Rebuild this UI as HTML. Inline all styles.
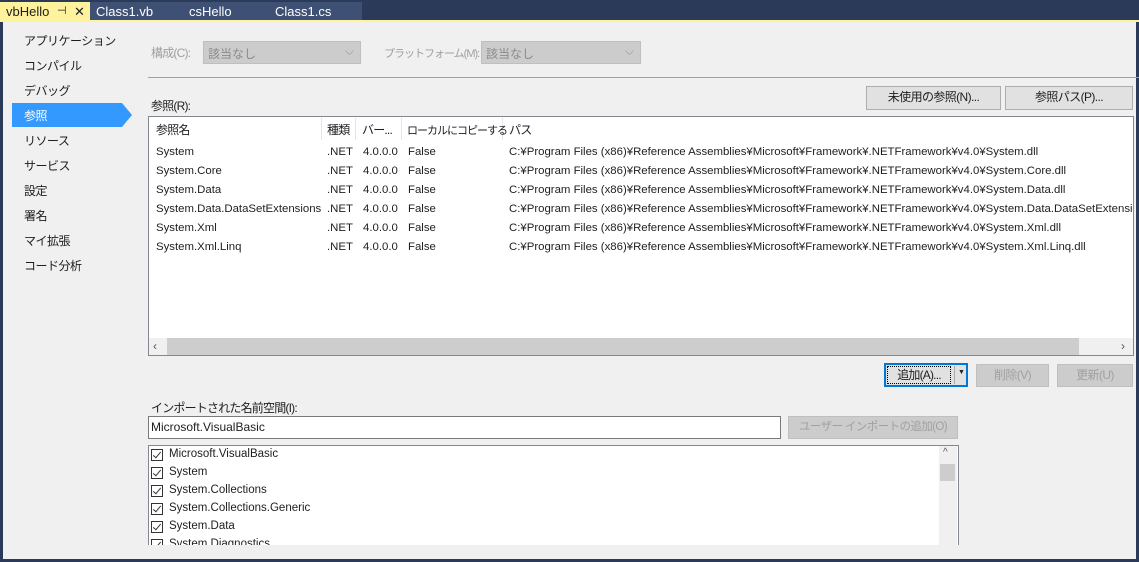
<!DOCTYPE html>
<html><head><meta charset="utf-8"><style>
*{margin:0;padding:0;box-sizing:border-box}
body{width:1139px;height:562px;overflow:hidden;background:#2a3a58;font-family:"Liberation Sans","Noto Sans CJK JP",sans-serif;font-size:12px;color:#1e1e1e;position:relative}
.a{position:absolute;white-space:nowrap}
.j{letter-spacing:-0.8px}
.main{position:absolute;left:3px;top:22px;width:1133px;height:537px;background:#f0f0f0}
.tab{position:absolute;top:2px;height:19px;color:#fff;font-size:13px;line-height:19px;padding-left:6px;white-space:nowrap}
.nav{position:absolute;left:24px;font-size:12px;letter-spacing:-0.5px}
.btn{position:absolute;border:1px solid #adadad;background:#e1e1e1;text-align:center;line-height:21px;letter-spacing:-0.6px;white-space:nowrap}
.dis{background:#cccccc;border-color:#bfbfbf;color:#a0a0a0}
.row span{position:absolute;white-space:nowrap;font-size:11.4px}
.cb{position:absolute;left:151px;width:12px;height:12px;border:1px solid #333;background:#fff}
.cb::after{content:"";position:absolute;left:3px;top:0px;width:3px;height:7px;border-right:1.5px solid #333;border-bottom:1.5px solid #333;transform:rotate(40deg)}
.ck{font-size:11.5px}
</style></head><body>
<div class="tab" style="left:0;width:90px;background:#fff29d;color:#1e1e1e">vbHello <span style="position:absolute;left:57px;font-size:11px">⊣</span><span style="position:absolute;left:74px">✕</span></div>
<div class="tab" style="left:90px;width:92px;background:#3e5073">Class1.vb</div>
<div class="tab" style="left:182px;width:88px;background:#3e5073;padding-left:7px">csHello</div>
<div class="tab" style="left:270px;width:92px;background:#3e5073;padding-left:5px">Class1.cs</div>
<div class="a" style="left:0;top:20px;width:1139px;height:2px;background:#fff29d"></div>
<div class="main"></div>
<div class="a" style="left:12px;top:103px;width:110px;height:24px;background:#3399ff"></div>
<div class="a" style="left:122px;top:103px;width:0;height:0;border-top:12px solid transparent;border-bottom:12px solid transparent;border-left:10px solid #3399ff"></div>
<div class="nav a" style="top:32px">アプリケーション</div>
<div class="nav a" style="top:57px">コンパイル</div>
<div class="nav a" style="top:82px">デバッグ</div>
<div class="nav a" style="top:107px;color:#fff">参照</div>
<div class="nav a" style="top:132px">リソース</div>
<div class="nav a" style="top:157px">サービス</div>
<div class="nav a" style="top:182px">設定</div>
<div class="nav a" style="top:207px">署名</div>
<div class="nav a" style="top:232px">マイ拡張</div>
<div class="nav a" style="top:257px">コード分析</div>

<div class="a j" style="left:151px;top:44px;color:#a0a0a0">構成(C):</div>
<div class="a" style="left:203px;top:41px;width:158px;height:23px;background:#ccc;border:1px solid #bfbfbf;color:#8a8a8a;padding:3px 4px">該当なし<span style="position:absolute;right:6px;top:2px;color:#999">⌵</span></div>
<div class="a j" style="left:384px;top:45px;color:#a0a0a0;font-size:11px;letter-spacing:-1px">プラットフォーム(M):</div>
<div class="a" style="left:481px;top:41px;width:160px;height:23px;background:#ccc;border:1px solid #bfbfbf;color:#8a8a8a;padding:3px 4px">該当なし<span style="position:absolute;right:6px;top:2px;color:#999">⌵</span></div>
<div class="a" style="left:148px;top:77px;width:991px;height:1px;background:#a0a0a0"></div>
<div class="btn" style="left:866px;top:86px;width:135px;height:24px">未使用の参照(N)...</div>
<div class="btn" style="left:1005px;top:86px;width:128px;height:24px">参照パス(P)...</div>
<div class="a j" style="left:151px;top:97px">参照(R):</div>

<div class="a" style="left:148px;top:116px;width:986px;height:240px;background:#fff;border:1px solid #828790"></div>
<div class="a" style="left:321px;top:118px;width:1px;height:22px;background:#e5e5e5"></div>
<div class="a" style="left:355px;top:118px;width:1px;height:22px;background:#e5e5e5"></div>
<div class="a" style="left:401px;top:118px;width:1px;height:22px;background:#e5e5e5"></div>
<div class="a" style="left:502px;top:118px;width:1px;height:22px;background:#e5e5e5"></div>
<div class="a j" style="left:156px;top:121px">参照名</div>
<div class="a j" style="left:327px;top:121px">種類</div>
<div class="a j" style="left:362px;top:121px">バー...</div>
<div class="a j" style="left:407px;top:122px;font-size:11px;letter-spacing:-1px">ローカルにコピーする</div>
<div class="a j" style="left:509px;top:121px">パス</div>
<div style="position:absolute;left:0;top:0;width:1133px;height:260px;overflow:hidden">
<div class="row"><span style="left:156px;top:146px">System</span><span style="left:327px;top:146px">.NET</span><span style="left:363px;top:146px">4.0.0.0</span><span style="left:408px;top:146px">False</span><span style="left:509px;top:146px">C:¥Program Files (x86)¥Reference Assemblies¥Microsoft¥Framework¥.NETFramework¥v4.0¥System.dll</span></div>
<div class="row"><span style="left:156px;top:165px">System.Core</span><span style="left:327px;top:165px">.NET</span><span style="left:363px;top:165px">4.0.0.0</span><span style="left:408px;top:165px">False</span><span style="left:509px;top:165px">C:¥Program Files (x86)¥Reference Assemblies¥Microsoft¥Framework¥.NETFramework¥v4.0¥System.Core.dll</span></div>
<div class="row"><span style="left:156px;top:184px">System.Data</span><span style="left:327px;top:184px">.NET</span><span style="left:363px;top:184px">4.0.0.0</span><span style="left:408px;top:184px">False</span><span style="left:509px;top:184px">C:¥Program Files (x86)¥Reference Assemblies¥Microsoft¥Framework¥.NETFramework¥v4.0¥System.Data.dll</span></div>
<div class="row"><span style="left:156px;top:203px">System.Data.DataSetExtensions</span><span style="left:327px;top:203px">.NET</span><span style="left:363px;top:203px">4.0.0.0</span><span style="left:408px;top:203px">False</span><span style="left:509px;top:203px">C:¥Program Files (x86)¥Reference Assemblies¥Microsoft¥Framework¥.NETFramework¥v4.0¥System.Data.DataSetExtensions.dll</span></div>
<div class="row"><span style="left:156px;top:222px">System.Xml</span><span style="left:327px;top:222px">.NET</span><span style="left:363px;top:222px">4.0.0.0</span><span style="left:408px;top:222px">False</span><span style="left:509px;top:222px">C:¥Program Files (x86)¥Reference Assemblies¥Microsoft¥Framework¥.NETFramework¥v4.0¥System.Xml.dll</span></div>
<div class="row"><span style="left:156px;top:241px">System.Xml.Linq</span><span style="left:327px;top:241px">.NET</span><span style="left:363px;top:241px">4.0.0.0</span><span style="left:408px;top:241px">False</span><span style="left:509px;top:241px">C:¥Program Files (x86)¥Reference Assemblies¥Microsoft¥Framework¥.NETFramework¥v4.0¥System.Xml.Linq.dll</span></div>
</div>
<div class="a" style="left:149px;top:338px;width:984px;height:17px;background:#f0f0f0"></div>
<div class="a" style="left:167px;top:338px;width:912px;height:17px;background:#cdcdcd"></div>
<div class="a" style="left:153px;top:339px;color:#555">‹</div>
<div class="a" style="left:1121px;top:339px;color:#555">›</div>

<div class="a" style="left:884px;top:363px;width:84px;height:24px;border:2px solid #0078d7;background:#e1e1e1"></div>
<div class="a j" style="left:887px;top:366px;width:64px;height:18px;border:1px dotted #000;text-align:center;line-height:16px">追加(A)...</div>
<div class="a" style="left:954px;top:366px;width:1px;height:18px;background:#aaa"></div>
<div class="a" style="left:958px;top:369px;font-size:7px">▼</div>
<div class="btn dis" style="left:976px;top:364px;width:73px;height:23px">削除(V)</div>
<div class="btn dis" style="left:1057px;top:364px;width:76px;height:23px">更新(U)</div>
<div class="a j" style="left:151px;top:399px">インポートされた名前空間(I):</div>
<div class="a" style="left:148px;top:416px;width:633px;height:23px;background:#fff;border:1px solid #7a7a7a;padding:3px 2px">Microsoft.VisualBasic</div>
<div class="btn dis" style="left:788px;top:416px;width:170px;height:23px;font-size:11.5px">ユーザー インポートの追加(O)</div>
<div class="a" style="left:148px;top:445px;width:811px;height:100px;background:#fff;border:1px solid #828790;border-bottom:none;overflow:hidden"></div>
<div class="a" style="left:939px;top:446px;width:18px;height:99px;background:#f0f0f0"></div>
<div class="a" style="left:940px;top:464px;width:15px;height:17px;background:#cdcdcd"></div>
<div class="a" style="left:943px;top:447px;color:#555;font-size:10px">^</div>
<div style="position:absolute;left:0;top:446px;width:938px;height:99px;overflow:hidden">
<div class="cb" style="top:3px"></div><div class="a ck" style="left:169px;top:2px">Microsoft.VisualBasic</div>
<div class="cb" style="top:21px"></div><div class="a ck" style="left:169px;top:20px">System</div>
<div class="cb" style="top:39px"></div><div class="a ck" style="left:169px;top:38px">System.Collections</div>
<div class="cb" style="top:57px"></div><div class="a ck" style="left:169px;top:56px">System.Collections.Generic</div>
<div class="cb" style="top:75px"></div><div class="a ck" style="left:169px;top:74px">System.Data</div>
<div class="cb" style="top:93px"></div><div class="a ck" style="left:169px;top:92px">System.Diagnostics</div>
</div>
</body></html>
